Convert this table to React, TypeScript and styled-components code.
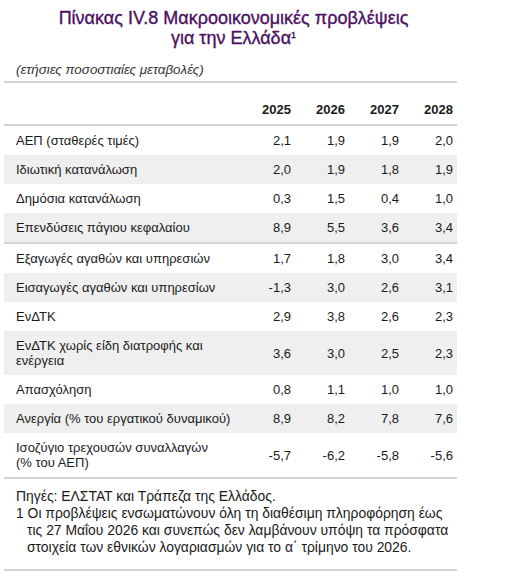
import React from 'react'
import styled, { createGlobalStyle } from 'styled-components'

const Global = createGlobalStyle`
  body {
    margin: 0;
    background: #fff;
    font-family: "Liberation Sans", Arial, sans-serif;
    color: #1a1a1a;
  }
`

const Page = styled.div`
  width: 453px;
  padding: 8px 0 0 4px;
`

const Title = styled.h1`
  margin: 0;
  text-align: center;
  font-size: 18px;
  line-height: 20px;
  font-weight: normal;
  color: #4b1160;
  -webkit-text-stroke: 0.35px #4b1160;
  padding-left: 6px;
  sup {
    font-size: 9px;
    vertical-align: 6px;
    line-height: 0;
  }
`

const Subtitle = styled.div`
  margin-top: 14px;
  padding: 0 0 4px 12px;
  font-size: 13.4px;
  font-style: italic;
  color: #333;
  border-bottom: 2px solid #d4d4d4;
`

const Table = styled.table`
  width: 100%;
  border-collapse: collapse;
  margin-top: 19px;
  font-size: 13px;
  border-bottom: 2px solid #d4d4d4;
`

const HeadCell = styled.th`
  font-weight: bold;
  text-align: right;
  padding: 0 4px 7px 0;
  width: 50px;
  border-bottom: 2px solid #d0d0d0;
  box-shadow: 0 1px 0 #ececec;
`

const Row = styled.tr<{ $shade?: boolean; $rule?: boolean }>`
  background: ${p => (p.$shade ? '#efefef' : '#fff')};
  border-bottom: ${p => (p.$rule ? '2px solid #d6d6d6' : 'none')};
`

const Label = styled.td`
  padding: 7px 0 7px 12px;
  line-height: 15px;
  text-align: left;
`

const Num = styled.td`
  padding: 7px 4px 7px 0;
  line-height: 15px;
  text-align: right;
`

const Notes = styled.div`
  padding: 9px 0 13px 12px;
  font-size: 13.9px;
  line-height: 17px;
  border-bottom: 2px solid #d4d4d4;
`

const Note = styled.p<{ $hang?: boolean }>`
  margin: 0;
  white-space: nowrap;
  padding-left: ${p => (p.$hang ? '11px' : '0')};
  text-indent: ${p => (p.$hang ? '-11px' : '0')};
`

const years = ['2025', '2026', '2027', '2028']

const rows: { label: React.ReactNode; values: string[]; rule?: boolean }[] = [
  { label: 'ΑΕΠ (σταθερές τιμές)', values: ['2,1', '1,9', '1,9', '2,0'] },
  { label: 'Ιδιωτική κατανάλωση', values: ['2,0', '1,9', '1,8', '1,9'] },
  { label: 'Δημόσια κατανάλωση', values: ['0,3', '1,5', '0,4', '1,0'] },
  { label: 'Επενδύσεις πάγιου κεφαλαίου', values: ['8,9', '5,5', '3,6', '3,4'], rule: true },
  { label: 'Εξαγωγές αγαθών και υπηρεσιών', values: ['1,7', '1,8', '3,0', '3,4'] },
  { label: 'Εισαγωγές αγαθών και υπηρεσίων', values: ['-1,3', '3,0', '2,6', '3,1'] },
  { label: 'ΕνΔΤΚ', values: ['2,9', '3,8', '2,6', '2,3'] },
  { label: <>ΕνΔΤΚ χωρίς είδη διατροφής και<br />ενέργεια</>, values: ['3,6', '3,0', '2,5', '2,3'] },
  { label: 'Απασχόληση', values: ['0,8', '1,1', '1,0', '1,0'] },
  { label: 'Ανεργία (% του εργατικού δυναμικού)', values: ['8,9', '8,2', '7,8', '7,6'] },
  { label: <>Ισοζύγιο τρεχουσών συναλλαγών<br />(% του ΑΕΠ)</>, values: ['-5,7', '-6,2', '-5,8', '-5,6'] },
]

const App = () => {
  return (
    <Page>
      <Global />
      <Title>
        Πίνακας IV.8 Μακροοικονομικές προβλέψεις
        <br />
        για την Ελλάδα<sup>1</sup>
      </Title>
      <Subtitle>(ετήσιες ποσοστιαίες μεταβολές)</Subtitle>
      <Table>
        <thead>
          <tr>
            <HeadCell style={{ width: 'auto' }} />
            {years.map(y => (
              <HeadCell key={y}>{y}</HeadCell>
            ))}
          </tr>
        </thead>
        <tbody>
          {rows.map((r, i) => (
            <Row key={i} $shade={i % 2 === 1} $rule={r.rule}>
              <Label>{r.label}</Label>
              {r.values.map((v, j) => (
                <Num key={j}>{v}</Num>
              ))}
            </Row>
          ))}
        </tbody>
      </Table>
      <Notes>
        <Note>Πηγές: ΕΛΣΤΑΤ και Τράπεζα της Ελλάδος.</Note>
        <Note $hang>
          1 Οι προβλέψεις ενσωματώνουν όλη τη διαθέσιμη πληροφόρηση έως
          <br />
          τις 27 Μαΐου 2026 και συνεπώς δεν λαμβάνουν υπόψη τα πρόσφατα
          <br />
          στοιχεία των εθνικών λογαριασμών για το α΄ τρίμηνο του 2026.
        </Note>
      </Notes>
    </Page>
  )
}

export default App
